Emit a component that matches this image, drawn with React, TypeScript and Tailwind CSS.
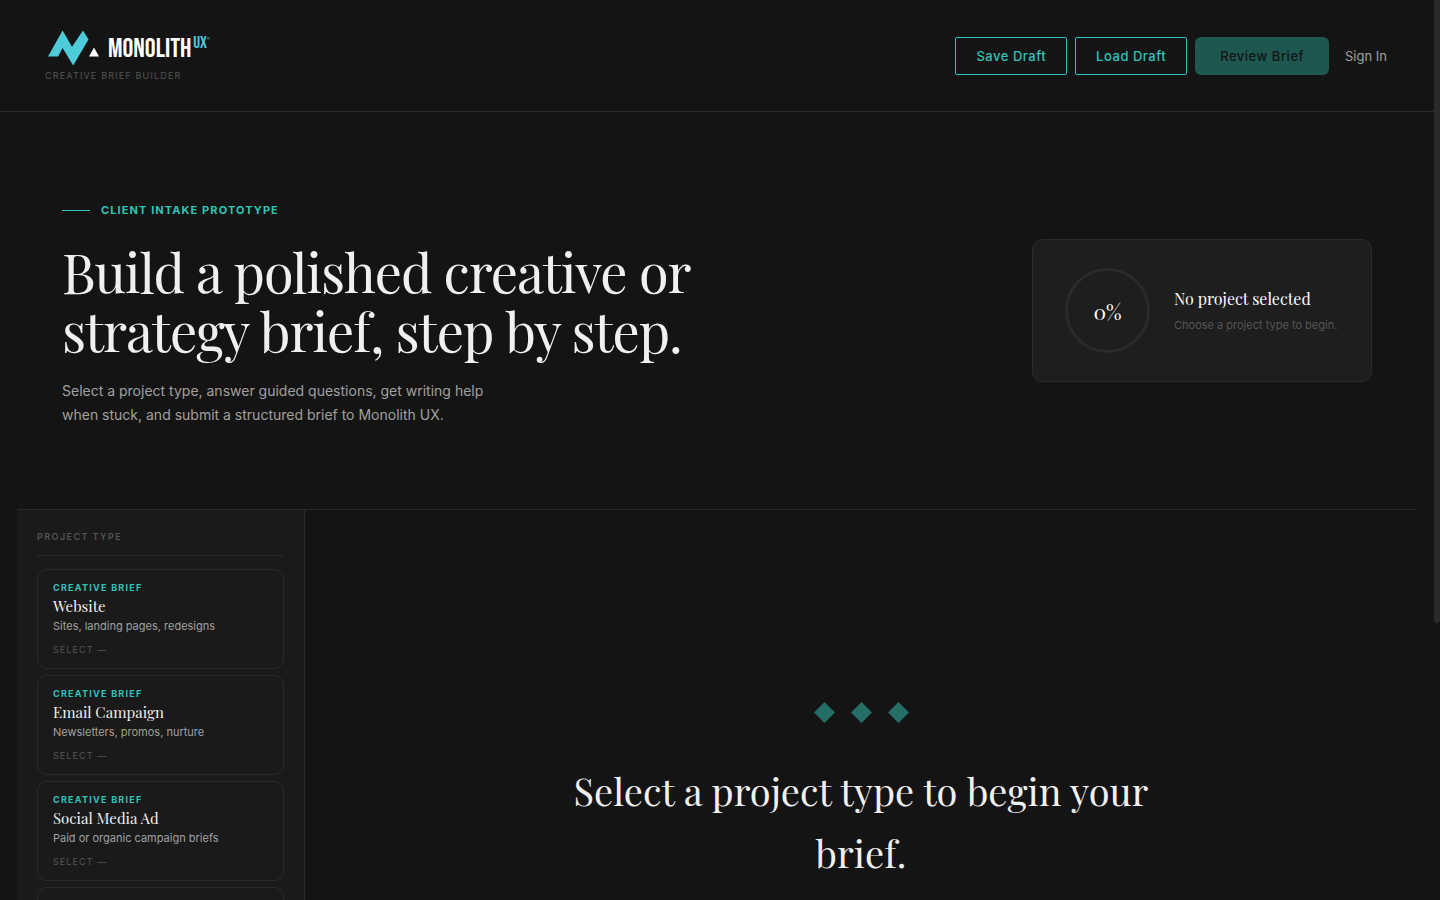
type ProjectType = {
  kind: string;
  title: string;
  description: string;
};

const PROJECT_TYPES: ProjectType[] = [
  { kind: 'Creative Brief', title: 'Website', description: 'Sites, landing pages, redesigns' },
  { kind: 'Creative Brief', title: 'Email Campaign', description: 'Newsletters, promos, nurture' },
  { kind: 'Creative Brief', title: 'Social Media Ad', description: 'Paid or organic campaign briefs' },
  { kind: 'Creative Brief', title: 'Other', description: 'Anything else' },
];

function Logo() {
  return (
    <a href="#" className="flex flex-col items-start">
      <span className="flex h-[41px] items-start pl-[3px]">
        <svg width="52" height="36" viewBox="0 0 52 36" className="mt-px" aria-hidden="true">
          <path d="M0 26.5 14.6 0.5 24 16.8 35 0.5 40.5 9.5 25.2 35.5 14.6 18 10 26.5Z" fill="#4dcbd8" />
          <path d="M46 17.5 51 26.5H41Z" fill="#fff" />
        </svg>
        <span className="ml-2 font-['Bebas_Neue',sans-serif] text-[27px] leading-10 text-white">Monolith</span>
        <span className="ml-0.5 font-['Bebas_Neue',sans-serif] text-[17px] leading-7 text-[#4dcbd8]">UX</span>
        <span className="mt-2 text-[4px] leading-none text-[#4dcbd8]">®</span>
      </span>
      <span className="text-[9px] leading-3 tracking-[0.13em] text-[#555] uppercase">Creative Brief Builder</span>
    </a>
  );
}

function Header() {
  return (
    <header className="flex items-center justify-between border-b border-[#2a2a2a] pt-[29px] pr-[39px] pb-[29px] pl-[45px]">
      <Logo />
      <nav className="flex items-center gap-2 text-[13px] leading-5 font-medium">
        <button className="rounded-xs border border-[#2ec4b6] px-5 py-2 tracking-[0.04em] text-[#2ec4b6]">Save Draft</button>
        <button className="rounded-xs border border-[#2ec4b6] px-5 py-2 tracking-[0.04em] text-[#2ec4b6]">Load Draft</button>
        <button disabled className="rounded-md bg-[#1e5750] px-[25px] py-[9px] tracking-[0.04em] text-[#141414]">Review Brief</button>
        <button className="px-2 py-2 font-normal text-[#a0a0a0]">Sign In</button>
      </nav>
    </header>
  );
}

function ProgressCard() {
  return (
    <aside className="mb-2 flex w-[340px] items-center gap-6 rounded-[10px] border border-[#2a2a2a] bg-[#1e1e1e] px-8 py-7">
      <div className="flex size-[85px] shrink-0 items-center justify-center rounded-full border-3 border-[#2a2a2a]">
        <span className="font-['Playfair_Display',serif] text-[21px] leading-8">0%</span>
      </div>
      <div>
        <h2 className="font-['Playfair_Display',serif] text-base leading-6">No project selected</h2>
        <p className="mt-1 text-[11px] leading-5 whitespace-nowrap text-[#555]">Choose a project type to begin.</p>
      </div>
    </aside>
  );
}

function Hero() {
  return (
    <section className="flex items-center justify-between px-[62px] pt-[90px] pb-[82px]">
      <div>
        <p className="flex items-center gap-[11px] text-[11px] leading-4 font-bold tracking-[0.1em] text-[#2ec4b6] uppercase">
          <span className="h-px w-7 bg-[#2ec4b6]" />
          Client Intake Prototype
        </p>
        <h1 className="mt-[25px] max-w-[680px] font-['Playfair_Display',serif] text-[54px] leading-[59px] tracking-[-0.02em] text-[#f0f0f0]">
          Build a polished creative or strategy brief, step by step.
        </h1>
        <p className="mt-[18px] max-w-[440px] text-sm leading-6 text-[#a0a0a0]">
          Select a project type, answer guided questions, get writing help when stuck, and submit a structured brief to Monolith UX.
        </p>
      </div>
      <ProgressCard />
    </section>
  );
}

function ProjectCard({ kind, title, description }: ProjectType) {
  return (
    <button className="flex flex-col items-start rounded-[10px] border border-[#2a2a2a] px-[15px] py-3 text-left">
      <span className="text-[9px] leading-3 font-bold tracking-[0.14em] text-[#2ec4b6] uppercase">{kind}</span>
      <span className="mt-0.5 font-['Playfair_Display',serif] text-[15px] leading-5 text-[#f0f0f0]">{title}</span>
      <span className="mt-px text-[11px] leading-[18px] text-[#a0a0a0]">{description}</span>
      <span className="mt-2 text-[9px] leading-[13px] tracking-[0.12em] text-[#555] uppercase">Select —</span>
    </button>
  );
}

function Sidebar() {
  return (
    <aside className="w-72 shrink-0 border-r border-[#2a2a2a] bg-[#1a1a1a] px-5 pt-5">
      <h2 className="border-b border-[#2a2a2a] pb-3 text-[9px] leading-[13px] font-semibold tracking-[0.16em] text-[#555] uppercase">
        Project Type
      </h2>
      <div className="mt-[13px] flex flex-col gap-1.5">
        {PROJECT_TYPES.map((type) => (
          <ProjectCard key={type.title} {...type} />
        ))}
      </div>
    </aside>
  );
}

function EmptyState() {
  return (
    <main className="flex flex-1 flex-col items-center px-6 pt-48 text-center">
      <div className="flex gap-4">
        {[0, 1, 2].map((i) => (
          <svg key={i} width="21" height="21" viewBox="0 0 21 21" fill="#246e66" aria-hidden="true">
            <path d="M10.5 0 21 10.5 10.5 21 0 10.5Z" />
          </svg>
        ))}
      </div>
      <h2 className="mt-[37px] max-w-[640px] font-['Playfair_Display',serif] text-[38px] leading-[62px] text-[#f0f0f0]">
        Select a project type to begin your brief.
      </h2>
    </main>
  );
}

export default function App() {
  return (
    <div className="h-screen overflow-y-auto bg-[#141414] pr-1.5 font-['Inter',sans-serif] text-white">
      <Header />
      <Hero />
      <div className="mx-[17px] flex min-h-[790px] border-t border-[#2a2a2a]">
        <Sidebar />
        <EmptyState />
      </div>
      {/* scroll indicator */}
      <div className="fixed top-0 right-0 h-[69.2%] w-1.5 rounded-b-full bg-[#2a2a2a]" />
    </div>
  );
}
